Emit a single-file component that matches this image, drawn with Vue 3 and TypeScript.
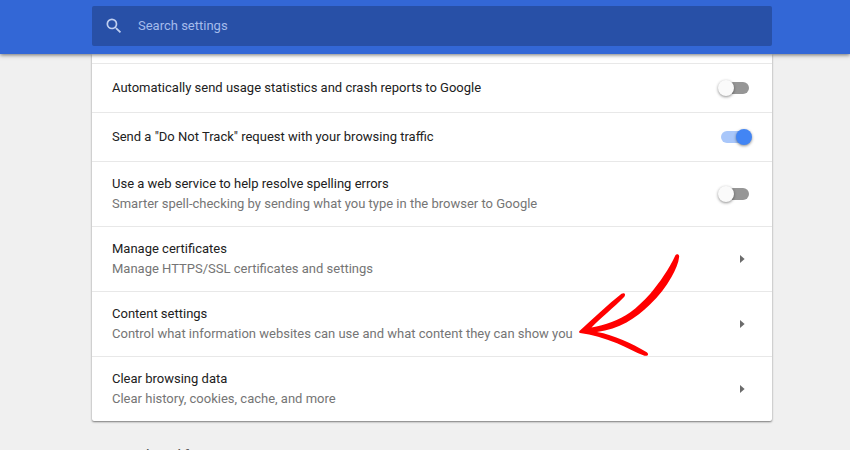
<script setup lang="ts">
import { ref } from 'vue'

interface Row {
  title: string
  detail?: string
  on?: boolean
}

const query = ref('')
const rows = ref<Row[]>([
  { title: 'Automatically send usage statistics and crash reports to Google', on: false },
  { title: 'Send a "Do Not Track" request with your browsing traffic', on: true },
  {
    title: 'Use a web service to help resolve spelling errors',
    detail: 'Smarter spell-checking by sending what you type in the browser to Google',
    on: false,
  },
  { title: 'Manage certificates', detail: 'Manage HTTPS/SSL certificates and settings' },
  { title: 'Content settings', detail: 'Control what information websites can use and what content they can show you' },
  { title: 'Clear browsing data', detail: 'Clear history, cookies, cache, and more' },
])
</script>

<template>
  <div class="page">
    <header class="toolbar">
      <label class="search">
        <svg class="search-icon" viewBox="0 0 24 24" width="20" height="20">
          <path d="M15.5 14h-.79l-.28-.27A6.471 6.471 0 0 0 16 9.5 6.5 6.5 0 1 0 9.5 16c1.61 0 3.09-.59 4.23-1.57l.27.28v.79l5 4.99L20.49 19l-4.99-5zm-6 0C7.01 14 5 11.99 5 9.5S7.01 5 9.5 5 14 7.01 14 9.5 11.99 14 9.5 14z" />
        </svg>
        <input v-model="query" class="search-input" placeholder="Search settings" />
      </label>
    </header>
    <main class="content">
      <section class="card">
        <div v-for="row in rows" :key="row.title" class="row" :class="{ tall: row.detail }">
          <div class="text">
            <div class="title">{{ row.title }}</div>
            <div v-if="row.detail" class="detail">{{ row.detail }}</div>
          </div>
          <button
            v-if="row.on !== undefined"
            class="toggle"
            :class="{ on: row.on }"
            role="switch"
            :aria-checked="row.on"
            @click="row.on = !row.on"
          >
            <span class="knob"></span>
          </button>
          <svg v-else class="caret" viewBox="0 0 5 8" width="5" height="8">
            <path d="M0 0L4.600 4L0 8Z" />
          </svg>
        </div>
      </section>
      <h2 class="heading">Passwords and forms</h2>
    </main>
    <svg class="arrow" viewBox="570 240 120 125" width="120" height="125">
      <path d="M675.4 255.200C676.500 253.400 679.200 254 679.200 256.400C678.600 263 675.500 269.500 671.500 277C666 287 659 296 650 304.500C636 318.500 619 329 597 332C614 335 632 343.500 646.800 352.300C649.300 354.200 647.800 356.300 644.500 355.700C635 352.500 627 347.500 617 343.300C604 338 592 334.500 580 333C578.700 332.600 578.700 331.500 580 330.400C594 318 607 305 621.500 293.700C624.500 292.200 626 294 624.300 296.700C614 307.500 601 317.500 591.500 327.400C605 325.500 619 320 630 312.500C637 307.500 644 300.500 650 294C660 282 669 269 675.400 255.200Z" />
    </svg>
  </div>
</template>

<style>
body {
  margin: 0;
  overflow: hidden;
}
</style>

<style scoped>
.page {
  position: relative;
  height: 450px;
  overflow: hidden;
  background: #f0f0f0;
  font-family: Roboto, sans-serif;
  font-size: 13px;
  line-height: 20px;
}
.toolbar {
  position: relative;
  z-index: 1;
  box-sizing: border-box;
  height: 54px;
  padding: 6px 78px 8px 92px;
  background: #3367d6;
  box-shadow: 0 1px 4px rgba(0, 0, 0, 0.55);
}
.search {
  display: flex;
  align-items: center;
  box-sizing: border-box;
  height: 40px;
  padding-left: 12px;
  border-radius: 2px;
  background: #2850a7;
}
.search-icon {
  fill: #c0cff0;
}
.search-input {
  flex: 1;
  margin-left: 14px;
  padding: 0;
  border: 0;
  outline: 0;
  background: transparent;
  color: #fff;
  font: inherit;
}
.search-input::placeholder {
  color: #a5bcec;
  opacity: 1;
}
.content {
  padding: 0 78px 0 92px;
}
.card {
  padding-top: 9px;
  background: #fff;
  border-radius: 0 0 2px 2px;
  box-shadow: 0 1px 2px rgba(0, 0, 0, 0.5);
}
.row {
  display: flex;
  align-items: center;
  justify-content: space-between;
  box-sizing: border-box;
  height: 49px;
  padding: 0 20px;
  border-top: 1px solid #e8e8e8;
}
.row.tall {
  height: 65px;
}
.title {
  color: #212121;
}
.detail {
  color: #757575;
}
.toggle {
  position: relative;
  width: 28px;
  height: 12px;
  margin-right: 3px;
  padding: 0;
  border: 0;
  border-radius: 6px;
  background: #969696;
}
.knob {
  position: absolute;
  top: -2px;
  left: -3px;
  width: 16px;
  height: 16px;
  border-radius: 50%;
  background: #fafafa;
  box-shadow: 0 1px 3px rgba(0, 0, 0, 0.45);
}
.toggle.on {
  background: #a9c7fa;
}
.on .knob {
  left: 15px;
  background: #4285f4;
}
.caret {
  margin-right: 7px;
  fill: #6b6b6b;
}
.heading {
  margin: 24px 0 0;
  color: #5a5a5a;
  font-size: 13px;
  font-weight: 500;
}
.arrow {
  position: absolute;
  z-index: 2;
  left: 570px;
  top: 240px;
  fill: #f00;
  pointer-events: none;
}
</style>
